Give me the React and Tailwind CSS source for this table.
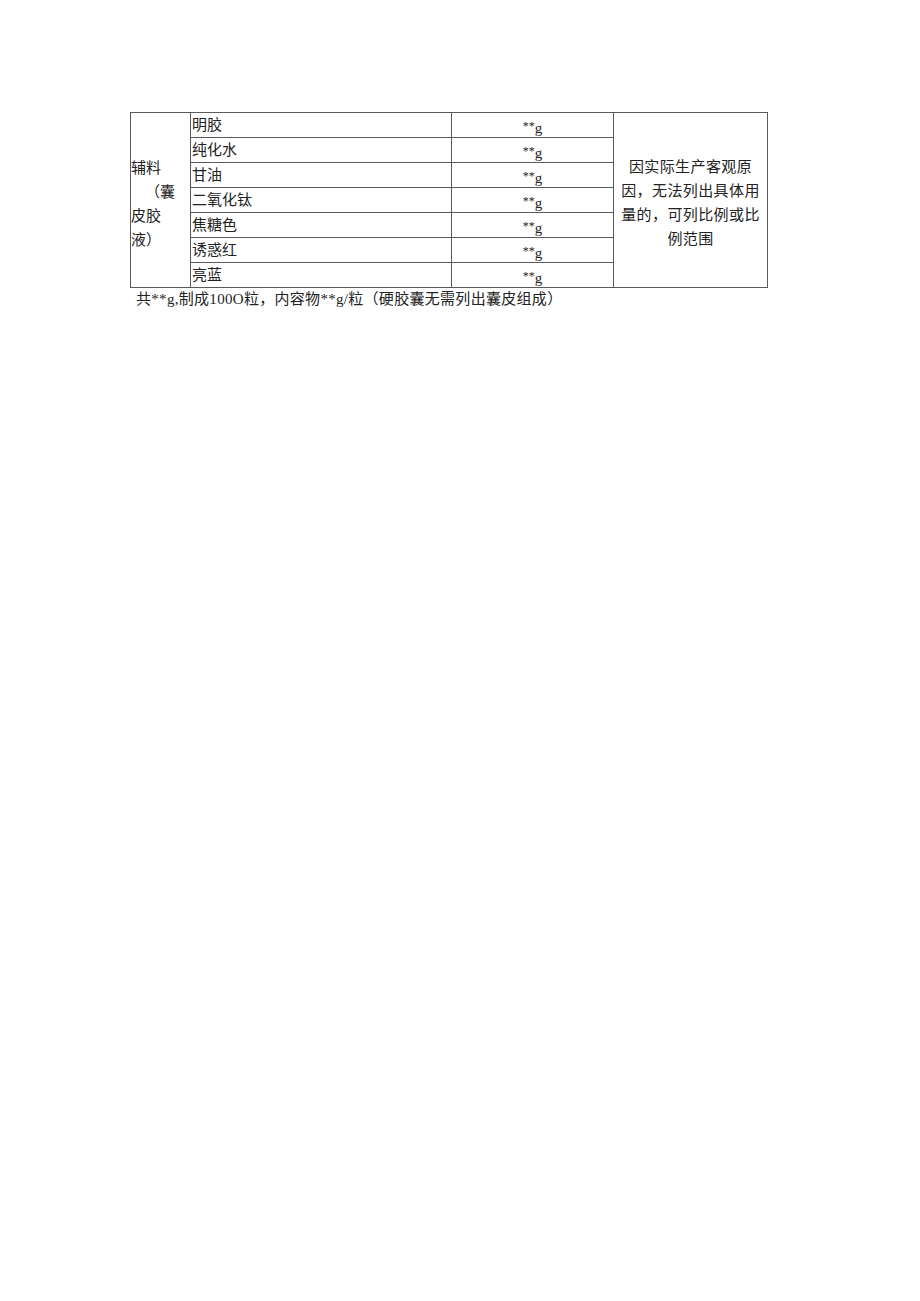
import React from 'react';

const rows = ['明胶', '纯化水', '甘油', '二氧化钛', '焦糖色', '诱惑红', '亮蓝'];

function Amount() {
  return (
    <span className="inline-flex items-baseline">
      <span className="text-[12px] leading-none">**</span>
      <span className="relative top-[3px] text-[15px] leading-none">g</span>
    </span>
  );
}

export default function App() {
  return (
    <div
      className="w-[920px] h-[1301px] bg-white text-[#222]"
      style={{ fontFamily: '"Liberation Serif", "Noto Sans CJK SC", serif' }}
    >
      <div className="pt-[112px] pl-[130px]">
        <table className="border-collapse table-fixed w-[637px]">
          <colgroup>
            <col className="w-[60px]" />
            <col className="w-[261px]" />
            <col className="w-[162px]" />
            <col className="w-[154px]" />
          </colgroup>
          <tbody>
            {rows.map((name, i) => (
              <tr key={name} className="h-[25px]">
                {i === 0 && (
                  <td
                    rowSpan={7}
                    className="border border-[#5a5a5a] p-0 pt-[8px] align-middle text-[15px] leading-[24px]"
                  >
                    <div>辅料</div>
                    <div className="pl-[14px]">（囊</div>
                    <div>皮胶</div>
                    <div>液）</div>
                  </td>
                )}
                <td className="border border-[#5a5a5a] p-0 pl-[1px] text-[15px] leading-[24px] align-middle">
                  {name}
                </td>
                <td className="border border-[#5a5a5a] p-0 text-center align-middle">
                  <Amount />
                </td>
                {i === 0 && (
                  <td
                    rowSpan={7}
                    className="border border-[#5a5a5a] p-0 pt-[6px] text-center align-middle text-[15px] leading-[24px] tracking-[0.4px]"
                  >
                    <div>因实际生产客观原</div>
                    <div>因，无法列出具体用</div>
                    <div>量的，可列比例或比</div>
                    <div>例范围</div>
                  </td>
                )}
              </tr>
            ))}
          </tbody>
        </table>
        <div className="pl-[6px] pt-[1px] text-[15px] leading-[20px] tracking-[0.3px]">
          共**g,制成100O粒，内容物**g/粒（硬胶囊无需列出囊皮组成）
        </div>
      </div>
    </div>
  );
}
